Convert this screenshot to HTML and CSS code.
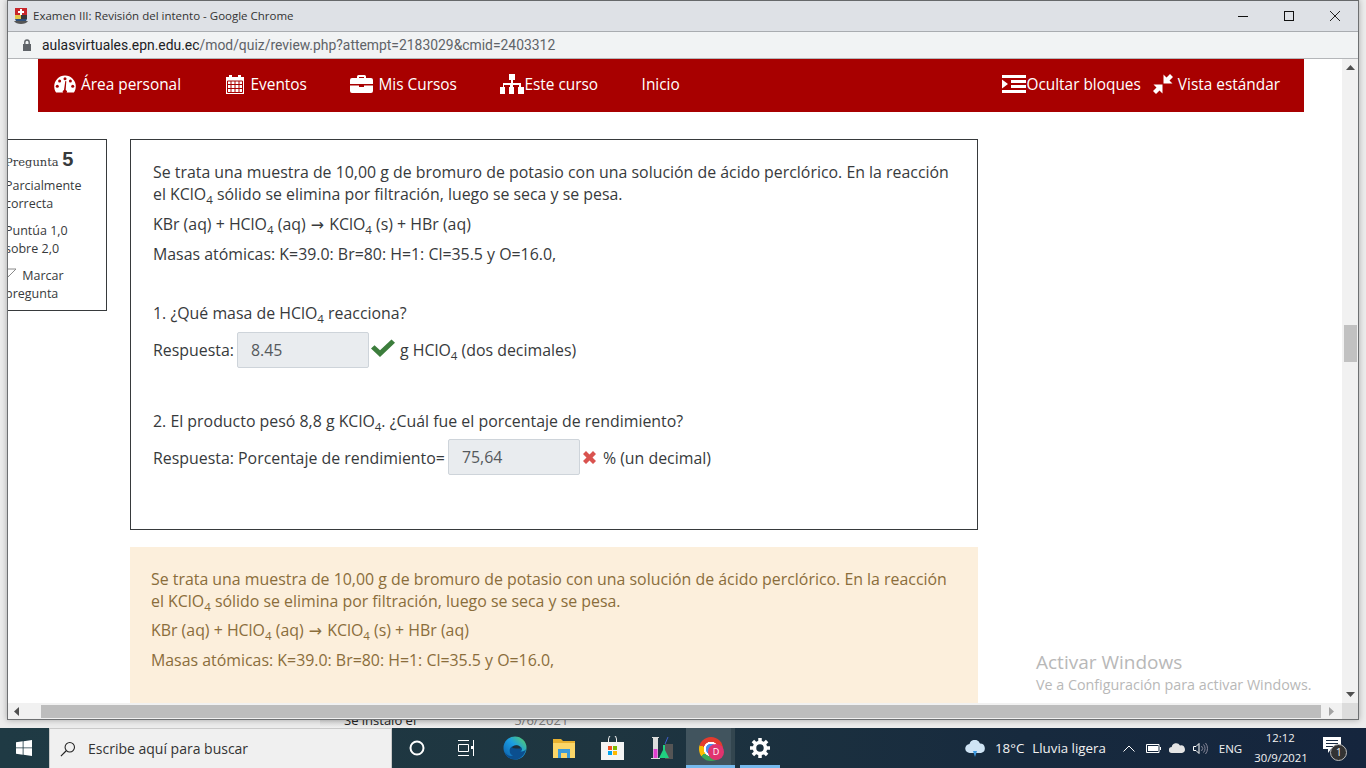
FILE: index.html
```html
<!DOCTYPE html>
<html lang="en">
<head>
    <meta charset="UTF-8">
    <meta name="viewport" content="width=device-width, initial-scale=1.0">
    <title>Examen III: Revisión del intento</title>
    <link rel="stylesheet" href="styles.css">
</head>
<body>
    <div class="desktop">
        <div class="window">
            <div class="titlebar">
                <svg class="favicon" width="14" height="16" viewBox="0 0 14 16"><path fill="#c8262a" d="M1 0h12v7H1z"/><path fill="#fff" d="M6 1h2v2h2v2H8v2H6V5H4V3h2z"/><path fill="#e3c84a" d="M1 7h6v4H1z"/><path fill="#3a3a3a" d="M7 7h6v4H7z"/><path fill="#2f4f7a" d="M1 11h12l-1 2H2z"/><path fill="#555" d="M0 13h14c-1 2-4 3-7 3s-6-1-7-3z"/></svg>
                <span class="title-text">Examen III: Revisión del intento - Google Chrome</span>
                <div class="win-controls">
                    <span class="win-btn"><svg width="12" height="12" viewBox="0 0 12 12"><path stroke="#111" d="M1 6.500h10"/></svg></span>
                    <span class="win-btn"><svg width="12" height="12" viewBox="0 0 12 12"><rect x="1.500" y="1.500" width="9" height="9" fill="none" stroke="#111"/></svg></span>
                    <span class="win-btn"><svg width="12" height="12" viewBox="0 0 12 12"><path stroke="#222" d="M1 1l10 10M11 1L1 11"/></svg></span>
                </div>
            </div>
            <div class="addressbar">
                <svg class="lock" width="10" height="12" viewBox="0 0 10 12"><path fill="#5f6368" d="M1 5h8v7H1z"/><path fill="none" stroke="#5f6368" stroke-width="1.400" d="M2.800 5V3.200a2.200 2.200 0 0 1 4.400 0V5"/></svg>
                <span class="url"><b>aulasvirtuales.epn.edu.ec</b>/mod/quiz/review.php?attempt=2183029&amp;cmid=2403312</span>
            </div>
            <div class="browser-body">
                <div class="viewport">
                    <nav class="navbar">
                        <a class="nav-item">
                            <svg width="22" height="18" viewBox="0 0 22 18"><path fill="#fff" d="M11 .5A10.800 10.800 0 0 0 .2 11.300c0 2.500.7 4.600 1.900 6.200h17.800c1.200-1.600 1.900-3.700 1.900-6.200A10.800 10.800 0 0 0 11 .5z"/><g fill="#a80000"><circle cx="11" cy="3.700" r="1.500"/><circle cx="5.600" cy="6" r="1.500"/><circle cx="16.400" cy="6" r="1.500"/><circle cx="3.300" cy="11.300" r="1.500"/><circle cx="18.700" cy="11.300" r="1.500"/><path d="M10 15l1.300-9 1 .2-.6 8.800a2 2 0 1 1-1.700 0z"/></g></svg>
                            <span>Área personal</span>
                        </a>
                        <a class="nav-item nav-wide">
                            <svg width="20" height="20" viewBox="0 0 20 20"><path fill="#fff" d="M1 3h3V1h3v2h6V1h3v2h3v17H1z"/><path stroke="#a80000" stroke-width="1" d="M2.500 7h15v11.500h-15zM2.500 10.500h15M2.500 14.500h15M6 7v11.500M10 7v11.500M14 7v11.500" fill="none"/></svg>
                            <span>Eventos</span>
                        </a>
                        <a class="nav-item">
                            <svg width="23" height="18" viewBox="0 0 23 18"><path fill="#fff" d="M7 3V1.500A1.500 1.500 0 0 1 8.500 0h6A1.500 1.500 0 0 1 16 1.500V3h5a2 2 0 0 1 2 2v4H0V5a2 2 0 0 1 2-2zm2 0h5V2H9zM0 10.500h9V12h5v-1.500h9V16a2 2 0 0 1-2 2H2a2 2 0 0 1-2-2z"/></svg>
                            <span>Mis Cursos</span>
                        </a>
                        <a class="nav-item nav-tight">
                            <svg width="24" height="20" viewBox="0 0 24 20"><path fill="#fff" d="M9 0h6v6h-2v3h8v4h3v7h-6v-7h1v-2h-6v2h1v7H9v-7h1v-2H4v2h1v7H0v-7h3V9h8V6H9z"/></svg>
                            <span>Este curso</span>
                        </a>
                        <a class="nav-item">Inicio</a>
                        <div class="nav-right">
                            <a class="nav-item nav-tight">
                                <svg width="24" height="18" viewBox="0 0 24 18"><path fill="#fff" d="M0 0h24v3H0zM9 5h15v3H9zM9 10h15v3H9zM0 15h24v3H0zM0 4.500L6 9l-6 4.500z"/></svg>
                                <span>Ocultar bloques</span>
                            </a>
                            <a class="nav-item">
                                <svg width="20" height="20" viewBox="0 0 20 20"><path fill="#fff" d="M10.500 .5V9.500h9l-3-3L20 3l-3-3-3.500 3.500zM9.500 10.500h-9l3 3L0 17l3 3 3.500-3.500 3 3z"/></svg>
                                <span>Vista estándar</span>
                            </a>
                        </div>
                    </nav>
                    <div class="question">
                        <div class="info">
                            <h3 class="info-no">Pregunta <span>5</span></h3>
                            <div class="info-block">Parcialmente correcta</div>
                            <div class="info-block">Puntúa 1,0 sobre 2,0</div>
                            <div class="info-block">
                                <svg class="flag" width="12" height="12" viewBox="0 0 12 12"><path fill="none" stroke="#8a8a8a" d="M1 1h10L7 5 3 9z"/></svg>
                                Marcar pregunta
                            </div>
                        </div>
                        <div class="content">
                            <div class="formulation">
                                <p>Se trata una muestra de 10,00 g de bromuro de potasio con una solución de ácido perclórico. En la reacción el KClO<sub>4</sub> sólido se elimina por filtración, luego se seca y se pesa.</p>
                                <p>KBr (aq) + HClO<sub>4</sub> (aq) <span class="arrow">→</span> KClO<sub>4</sub> (s) + HBr (aq)</p>
                                <p>Masas atómicas: K=39.0: Br=80: H=1: Cl=35.5 y O=16.0,</p>
                                <p class="ask">1. ¿Qué masa de HClO<sub>4</sub> reacciona?</p>
                                <div class="answer">
                                    <span>Respuesta:</span>
                                    <span class="field">8.45</span>
                                    <svg class="mark" width="24" height="18" viewBox="0 0 24 19" preserveAspectRatio="none"><path fill="#3c7d3c" d="M0 10l3.500-3.500L9 12 20.500 .5 24 4 9 19z"/></svg>
                                    <span>g HClO<sub>4</sub> (dos decimales)</span>
                                </div>
                                <p class="ask ask-two">2. El producto pesó 8,8 g KClO<sub>4</sub>. ¿Cuál fue el porcentaje de rendimiento?</p>
                                <div class="answer answer-two">
                                    <span>Respuesta: Porcentaje de rendimiento=</span>
                                    <span class="field">75,64</span>
                                    <svg class="mark" width="13" height="13" viewBox="0 0 13 13"><path fill="#d9534f" d="M3 0l3.500 3.500L10 0l3 3-3.500 3.500L13 10l-3 3-3.500-3.500L3 13l-3-3 3.500-3.500L0 3z"/></svg>
                                    <span>% (un decimal)</span>
                                </div>
                            </div>
                            <div class="feedback">
                                <p>Se trata una muestra de 10,00 g de bromuro de potasio con una solución de ácido perclórico. En la reacción el KClO<sub>4</sub> sólido se elimina por filtración, luego se seca y se pesa.</p>
                                <p>KBr (aq) + HClO<sub>4</sub> (aq) <span class="arrow">→</span> KClO<sub>4</sub> (s) + HBr (aq)</p>
                                <p>Masas atómicas: K=39.0: Br=80: H=1: Cl=35.5 y O=16.0,</p>
                            </div>
                        </div>
                    </div>
                    <div class="watermark">
                        <div class="wm-big">Activar Windows</div>
                        <div class="wm-small">Ve a Configuración para activar Windows.</div>
                    </div>
                </div>
                <div class="vscroll">
                    <svg width="9" height="5" viewBox="0 0 9 5"><path fill="#505050" d="M4.500 0L9 5H0z"/></svg>
                    <div class="vthumb"></div>
                    <svg class="vdown" width="9" height="5" viewBox="0 0 9 5"><path fill="#505050" d="M0 0h9L4.500 5z"/></svg>
                </div>
            </div>
            <div class="hscroll">
                <svg width="5" height="9" viewBox="0 0 5 9"><path fill="#505050" d="M5 0v9L0 4.500z"/></svg>
                <div class="hthumb"></div>
                <svg width="5" height="9" viewBox="0 0 5 9"><path fill="#a3a3a3" d="M0 0v9l5-4.500z"/></svg>
            </div>
        </div>
        <div class="behind"><span>Se instaló el</span><span class="behind-date">5/6/2021</span></div>
    </div>
    <div class="taskbar">
        <div class="start">
            <svg width="16" height="16" viewBox="0 0 16 16"><path fill="#fff" d="M0 2.300l6.700-1v6.200H0zM7.500 1.200L16 0v7.500H7.500zM0 8.300h6.700v6.400l-6.700-1zM7.500 8.300H16V16l-8.500-1.200z"/></svg>
        </div>
        <div class="search">
            <svg width="16" height="16" viewBox="0 0 18 18"><circle cx="11" cy="7" r="5.300" fill="none" stroke="#222" stroke-width="1.200"/><path stroke="#222" stroke-width="1.300" d="M7 11l-6 6"/></svg>
            <span>Escribe aquí para buscar</span>
        </div>
        <div class="task">
            <svg width="16" height="16" viewBox="0 0 16 16"><circle cx="8" cy="8" r="6.500" fill="none" stroke="#fff" stroke-width="2"/></svg>
        </div>
        <div class="task">
            <svg width="16" height="16" viewBox="0 0 16 16"><path fill="none" stroke="#fff" d="M0 .5h11M0 15.500h11M.5 4.500h10v7H.5zM15.500 0v16"/><path fill="#fff" d="M13 6h2v3h-2z"/></svg>
        </div>
        <div class="task">
            <svg width="24" height="24" viewBox="0 0 24 24"><defs><linearGradient id="edge" x1="0" y1="1" x2="1" y2="0"><stop offset="0" stop-color="#0c59a4"/><stop offset=".55" stop-color="#1b9de2"/><stop offset="1" stop-color="#5fd35a"/></linearGradient></defs><circle cx="12" cy="12" r="11.500" fill="url(#edge)"/><path fill="#0b4f8f" d="M23 13c-1 6-6 10.500-11 10.500-5 0-9-3-10-7 2 3 5 4 8 3-3-1-4-4-3-7 1-2 3-3 6-3 4 0 6 2 6 4 0 1-1 1.500-2 1.500 2 1 5 0 6-2z"/><path fill="#1e2f38" d="M13 12.500c2 0 3.500.3 4.500-.3-.3-1.800-2-3-4-3-2.500 0-4 1.300-4.300 3 .8-.3 2.300.3 3.800.3z"/></svg>
        </div>
        <div class="task">
            <svg width="22" height="20" viewBox="0 0 22 20"><path fill="#e8b130" d="M0 1h8l2 2h12v3H0z"/><path fill="#fbd668" d="M0 5h22v15H0z"/><path fill="#3b9ad9" d="M5 11h12v9h-3v-5H8v5H5z"/></svg>
        </div>
        <div class="task">
            <svg width="23" height="24" viewBox="0 0 23 24"><path fill="none" stroke="#eee" d="M7.500 6V3a4 4 0 0 1 8 0v3"/><path fill="#f4f4f4" d="M0 6h23v18H0z"/><path fill="#f25022" d="M7 10h4v4H7z"/><path fill="#7fba00" d="M12 10h4v4h-4z"/><path fill="#00a4ef" d="M7 15h4v4H7z"/><path fill="#ffb900" d="M12 15h4v4h-4z"/></svg>
        </div>
        <div class="task">
            <svg width="24" height="24" viewBox="0 0 24 24"><path fill="#ddd" d="M2 1h7v1H8v20h2v1H1v-1h2V2H2z"/><path fill="#e040d0" d="M3.500 13h4v9h-4z"/><path fill="#555" d="M15 8h8v15h-8z"/><path fill="#20d080" d="M13 9h2v5l4 8H9l4-8z"/><path stroke="#4060d0" d="M15 8l3-7"/></svg>
        </div>
        <div class="task task-active">
            <span class="chrome"></span>
            <span class="chrome-badge">D</span>
        </div>
        <div class="task task-open">
            <svg width="20" height="20" viewBox="0 0 20 20"><circle cx="10" cy="10" r="5.500" fill="none" stroke="#fff" stroke-width="3.500"/><path stroke="#fff" stroke-width="3.500" d="M10 0v4M10 16v4M0 10h4M16 10h4M2.900 2.900l2.800 2.800M14.300 14.300l2.800 2.800M2.900 17.100l2.800-2.800M14.300 5.700l2.800-2.800"/></svg>
        </div>
        <div class="tray">
            <svg class="tray-weather" width="21" height="17" viewBox="0 0 21 17"><path fill="#cfe4f5" d="M5 13a4.500 4.500 0 0 1-.5-9A5.500 5.500 0 0 1 15 3.500a4.800 4.800 0 0 1 1 9.500z"/><path fill="#3a97e0" d="M8 11h4l-2 6z"/></svg>
            <span class="tray-temp">18°C</span>
            <span class="tray-cond">Lluvia ligera</span>
            <svg class="tray-chev" width="12" height="7" viewBox="0 0 12 7"><path fill="none" stroke="#fff" d="M.5 6.500l5.500-5.500 5.500 5.500"/></svg>
            <svg class="tray-batt" width="15" height="9" viewBox="0 0 15 9"><path fill="none" stroke="#fff" d="M.5.500h12.500v8H.5z"/><path fill="#fff" d="M2 2h10v5H2zM14 3h1v3h-1z"/></svg>
            <svg class="tray-cloud" width="16" height="10" viewBox="0 0 16 10"><path fill="#e4e4e4" d="M3 10a3 3 0 0 1-.3-6A4.500 4.500 0 0 1 11 2.500 3.800 3.800 0 0 1 13 10z"/></svg>
            <svg class="tray-vol" width="16" height="13" viewBox="0 0 16 13"><path fill="none" stroke="#fff" d="M.5 4.500h2.500l3-3v10l-3-3H.5z"/><path fill="none" stroke="#889" d="M8.500 4a3.500 3.500 0 0 1 0 5M10.500 2.500a6 6 0 0 1 0 8M12.500 1a8.500 8.500 0 0 1 0 11"/></svg>
            <span class="tray-lang">ENG</span>
            <div class="tray-clock"><div>12:12</div><div>30/9/2021</div></div>
            <div class="tray-notif">
                <svg width="18" height="16" viewBox="0 0 18 16"><path fill="#fff" d="M0 0h18v12H8l-3 4v-4H0z"/><path stroke="#1a2c42" d="M3 3.500h12M3 6.500h12M3 9.500h8"/></svg>
                <span class="notif-count">1</span>
            </div>
        </div>
    </div>
</body>
</html>
```

FILE: styles.css
```css
body {
    margin: 0;
    width: 1366px;
    height: 768px;
    overflow: hidden;
    font-family: "Open Sans", sans-serif;
    background: #ececec;
    display: flex;
    flex-direction: column;
}
.desktop {
    height: 728px;
    position: relative;
    overflow: hidden;
}
.window {
    margin-left: 7px;
    width: 1352px;
    height: 720px;
    box-sizing: border-box;
    border: 1px solid #6e7072;
    border-top-color: #66686a;
    display: flex;
    flex-direction: column;
    background: #fff;
    box-shadow: 0 0 6px rgba(0, 0, 0, 0.3);
    position: relative;
    z-index: 1;
}
.titlebar {
    height: 31px;
    flex: none;
    background: #dee1e6;
    border-bottom: 1px solid #a9acb0;
    box-sizing: border-box;
    display: flex;
    align-items: center;
    padding: 0 0 1px 6px;
}
.favicon {
    margin-right: 5px;
}
.title-text {
    font-size: 11.500px;
    color: #333;
}
.win-controls {
    margin-left: auto;
    display: flex;
}
.win-btn {
    width: 46px;
    display: flex;
    justify-content: center;
}
.addressbar {
    height: 27px;
    flex: none;
    background: #f1f3f4;
    border-bottom: 1px solid #b4b6b9;
    box-sizing: border-box;
    display: flex;
    align-items: center;
    padding-left: 14px;
}
.lock {
    margin-right: 10px;
}
.url {
    font-family: Roboto, sans-serif;
    font-size: 13.900px;
    color: #5f6368;
}
.url b {
    font-weight: 400;
    color: #202124;
}
.browser-body {
    flex: 1;
    display: flex;
    min-height: 0;
}
.viewport {
    flex: 1;
    overflow: hidden;
    position: relative;
    background: #fff;
}
.navbar {
    margin-left: 30px;
    width: 1266px;
    height: 53px;
    box-sizing: border-box;
    padding: 0 24px 3px 16px;
    background: #a80000;
    display: flex;
    align-items: center;
    gap: 43.500px;
    color: #fff;
    font-size: 15.400px;
}
.nav-item {
    display: flex;
    align-items: center;
    gap: 5px;
    white-space: nowrap;
}
.nav-tight {
    gap: 0;
}
.nav-wide {
    gap: 6px;
}
.nav-right {
    margin-left: auto;
    display: flex;
    gap: 12px;
}
.question {
    margin-top: 27px;
    margin-left: -8px;
    display: flex;
    align-items: flex-start;
    gap: 23px;
}
.info {
    flex: none;
    width: 107px;
    box-sizing: border-box;
    border: 1px solid #373a3c;
    padding: 8px 16px 7px 4px;
    font-size: 12.500px;
    line-height: 18px;
    color: #373a3c;
}
.info-no {
    margin: 0 0 7px;
    height: 22px;
    font-family: "DejaVu Serif", serif;
    font-size: 11.500px;
    font-weight: 400;
    line-height: 22px;
}
.info-no span {
    font-family: "Liberation Sans", sans-serif;
    font-size: 20px;
    font-weight: 700;
}
.info-block {
    margin-bottom: 9px;
}
.info-block:last-child {
    margin-bottom: 0;
}
.flag {
    margin-right: 2px;
}
.content {
    flex: none;
    width: 848px;
}
.formulation {
    height: 391px;
    box-sizing: border-box;
    border: 1px solid #373a3c;
    padding: 21px 22px 0;
    font-size: 15.900px;
    color: #373a3c;
}
p {
    margin: 0 0 8px;
    line-height: 22px;
}
sub {
    font-size: 11.500px;
    line-height: 0;
}
.arrow {
    font-family: "DejaVu Sans", sans-serif;
    line-height: 0;
    margin: 0 1px;
}
.ask {
    margin-top: 37px;
}
.ask-two {
    margin-top: 42px;
    margin-bottom: 7px;
}
.answer {
    display: flex;
    align-items: center;
    height: 36px;
}
.answer-two {
    height: 38px;
}
.field {
    width: 132px;
    height: 36px;
    box-sizing: border-box;
    margin-left: 3px;
    padding-left: 13px;
    background: #e9ecef;
    border: 1px solid #ced4da;
    border-radius: 2px;
    color: #55595c;
    line-height: 34px;
}
.answer-two .field {
    margin-bottom: 2px;
}
.mark {
    margin: 0 5px 5px 2px;
}
.answer-two .mark {
    margin: 0 7px 1px 3px;
}
.feedback {
    margin-top: 17px;
    height: 220px;
    box-sizing: border-box;
    padding: 21px 22px 0 21px;
    background: #fcefdc;
    color: #8a6d3b;
    font-size: 15.900px;
}
.feedback p:first-child {
    margin-bottom: 7px;
}
.watermark {
    position: absolute;
    left: 1028px;
    top: 590px;
    color: #b8b8b8;
}
.wm-big {
    font-size: 19px;
    line-height: 26px;
}
.wm-small {
    font-size: 14.300px;
    line-height: 20px;
}
.vscroll {
    flex: none;
    width: 16px;
    background: #f1f1f1;
    display: flex;
    flex-direction: column;
    align-items: center;
    padding-top: 6px;
    box-sizing: border-box;
}
.vthumb {
    width: 13px;
    height: 37px;
    margin-top: 255px;
    background: #c1c1c1;
}
.vdown {
    margin-top: auto;
    margin-bottom: 6px;
}
.hscroll {
    height: 16px;
    flex: none;
    background: linear-gradient(to left, #dcdcdc 16px, #f1f1f1 16px);
    display: flex;
    align-items: center;
    padding: 0 24px 0 6px;
    box-sizing: border-box;
}
.hthumb {
    flex: 1;
    height: 13px;
    margin: 0 8px 0 22px;
    background: #bdbdbd;
}
.behind {
    margin-left: 320px;
    width: 330px;
    height: 8px;
    background: linear-gradient(#d8d8d8, #f0f0f0);
    display: flex;
    gap: 98px;
    padding-left: 24px;
    font-size: 13px;
    line-height: 8px;
    color: #222;
    box-sizing: border-box;
}
.behind span {
    display: block;
    margin-top: -4px;
}
.behind .behind-date {
    color: #777;
}
.taskbar {
    height: 40px;
    flex: none;
    display: flex;
    background: linear-gradient(90deg, #1f3a44 0%, #1e3540 45%, #172a3e 75%, #15253d 100%);
    color: #fff;
}
.start {
    width: 49px;
    display: flex;
    align-items: center;
    justify-content: center;
    box-sizing: border-box;
    padding-right: 1px;
}
.search {
    width: 343px;
    box-sizing: border-box;
    background: #f0f0f0;
    border: 1px solid #c9c9c9;
    border-width: 1px 1px 0;
    display: flex;
    align-items: center;
    padding-left: 10px;
    gap: 12px;
    color: #333;
    font-size: 14px;
}
.task {
    width: 49px;
    flex: none;
    display: flex;
    align-items: center;
    justify-content: center;
    position: relative;
    box-sizing: border-box;
}
.task-active {
    background: linear-gradient(to left, #33464f 4px, #41545e 4px);
    padding-top: 1px;
}
.task-active::after,
.task-open::after {
    content: "";
    position: absolute;
    left: 0;
    right: 0;
    bottom: 0;
    height: 3px;
    background: #76b9ed;
}
.task-open::after {
    left: 5px;
    right: 4px;
}
.chrome {
    width: 24px;
    height: 24px;
    border-radius: 50%;
    background:
        radial-gradient(circle, #4a8ef0 0 5px, #fff 5.500px 7px, transparent 7.500px),
        conic-gradient(#e33b2e 0 30%, #3aa757 30% 65%, #fbbc04 65% 80%, #e33b2e 80%);
}
.chrome-badge {
    position: absolute;
    left: 22px;
    top: 16px;
    width: 16px;
    height: 16px;
    border-radius: 50%;
    background: #e0336e;
    font-size: 9px;
    line-height: 16px;
    text-align: center;
    color: #fff;
}
.tray {
    flex: 1;
    display: flex;
    align-items: center;
    font-size: 13.300px;
    color: #f2f2f2;
}
.tray-weather {
    margin-left: 181px;
}
.tray-temp {
    margin-left: 9px;
}
.tray-cond {
    margin-left: 8px;
}
.tray-chev {
    margin-left: 17px;
}
.tray-batt {
    margin-left: 11px;
}
.tray-cloud {
    margin-left: 8px;
}
.tray-vol {
    margin-left: 8px;
}
.tray-lang {
    margin-left: 10px;
    font-size: 11.500px;
}
.tray-clock {
    margin-left: 12px;
    width: 52px;
    text-align: center;
    font-size: 11.300px;
    line-height: 20px;
}
.tray-notif {
    margin-left: 17px;
    position: relative;
    height: 22px;
}
.notif-count {
    position: absolute;
    left: 7px;
    top: 7px;
    width: 15px;
    height: 15px;
    border-radius: 50%;
    border: 1px solid #bbb;
    background: #333;
    font-size: 10px;
    line-height: 15px;
    text-align: center;
}
```
